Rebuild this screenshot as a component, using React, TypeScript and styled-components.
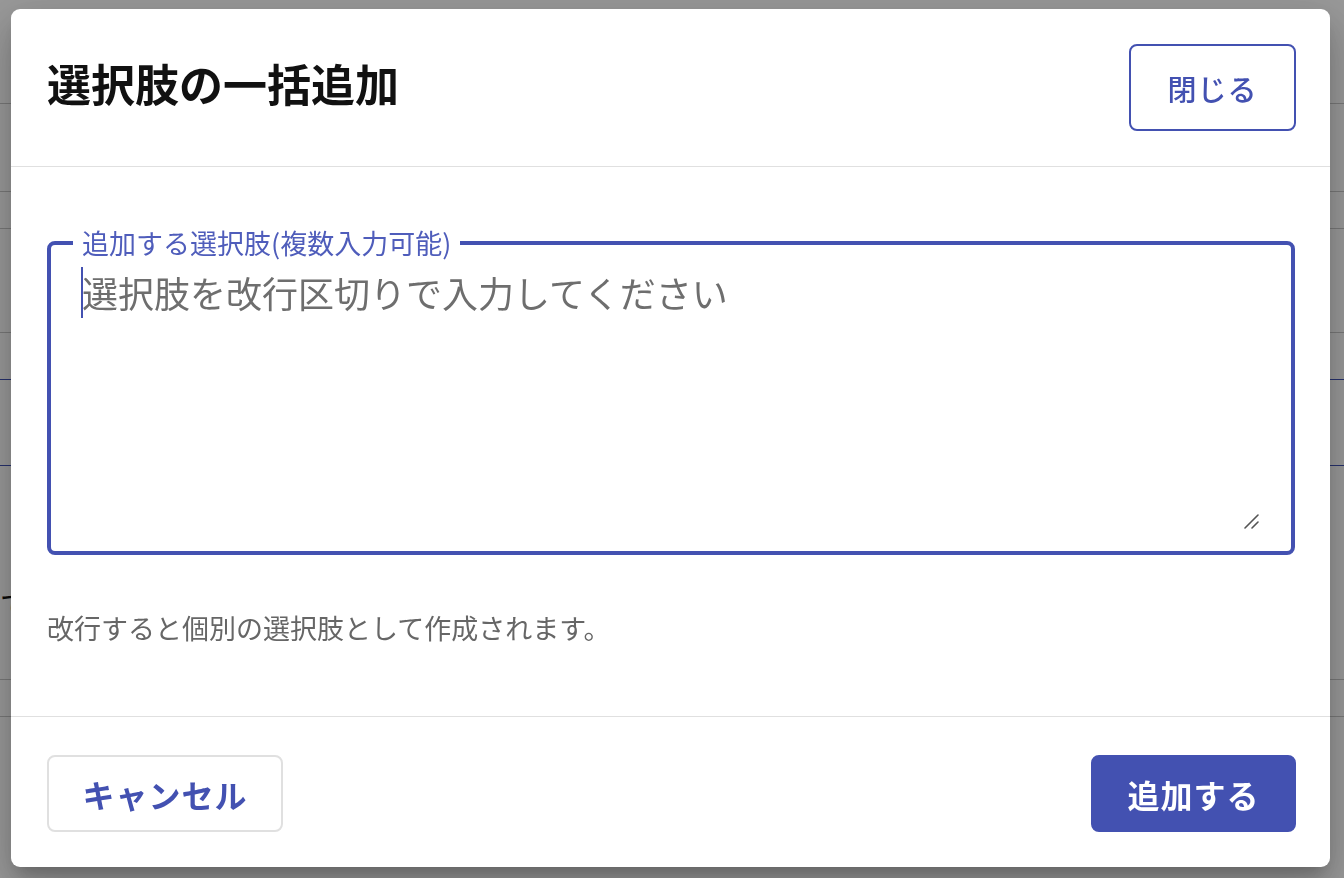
import styled, { createGlobalStyle } from 'styled-components';

const GlobalStyle = createGlobalStyle`
  html, body {
    margin: 0;
    padding: 0;
    background: #ffffff;
    font-family: "Noto Sans CJK JP", "Noto Sans", sans-serif;
  }
  #root {
    height: 878px;
    overflow: hidden;
  }
`;

const indigo = '#4351b1';

// page behind the overlay
const Page = styled.div`
  display: flex;
  flex-direction: column;
  height: 878px;
`;

const PageRow = styled.div<{ $h: number; $line: string }>`
  height: ${(p) => p.$h}px;
  border-bottom: 1px solid ${(p) => p.$line};
  box-sizing: border-box;
  display: flex;
  align-items: center;
  font-size: 30px;
  color: #111;
`;

const Backdrop = styled.div`
  position: fixed;
  inset: 0;
  background: rgba(0, 0, 0, 0.4);
  display: flex;
  align-items: flex-start;
  padding: 9px 14px 0 11px;
`;

const Dialog = styled.div`
  flex: 1;
  background: #fff;
  border-radius: 9px;
  display: flex;
  flex-direction: column;
  box-shadow: 0 11px 15px -7px rgba(0, 0, 0, 0.2), 0 24px 38px 3px rgba(0, 0, 0, 0.14),
    0 9px 46px 8px rgba(0, 0, 0, 0.12);
`;

const Header = styled.div`
  display: flex;
  align-items: center;
  justify-content: space-between;
  padding: 35px 34px 35px 36px;
  border-bottom: 1px solid #e0e0e0;
`;

const Title = styled.h2`
  margin: 0 0 10px;
  font-size: 44px;
  font-weight: 700;
  line-height: 1;
  color: #111;
`;

const OutlineButton = styled.button`
  width: 167px;
  height: 87px;
  box-sizing: border-box;
  background: #fff;
  border: 2px solid ${indigo};
  border-radius: 8px;
  color: ${indigo};
  font-family: inherit;
  font-size: 29px;
  font-weight: 500;
  letter-spacing: 1px;
  cursor: pointer;
`;

const Body = styled.div`
  padding: 62px 35px 66px 36px;
  display: flex;
  flex-direction: column;
`;

const Field = styled.fieldset`
  margin: 0;
  border: 4px solid ${indigo};
  border-radius: 8px;
  padding: 11px 31px 25px 31px;
  min-width: 0;
`;

const Legend = styled.legend`
  margin-left: -9px;
  padding: 0 9px;
  font-size: 27px;
  line-height: 1;
  color: #4f5dbb;
`;

const InputWrap = styled.div`
  position: relative;
  display: flex;
`;

const TextArea = styled.textarea`
  flex: 1;
  height: 259px;
  margin: 0;
  padding: 0;
  border: none;
  outline: none;
  resize: none;
  font-family: inherit;
  font-size: 36px;
  line-height: 51.75px;
  color: #222;
  caret-color: transparent;
  background: transparent;

  &::placeholder {
    color: #6e6e6e;
    opacity: 1;
  }
`;

const Caret = styled.span`
  position: absolute;
  left: -1px;
  top: 0;
  width: 2px;
  height: 51px;
  background: ${indigo};
`;

const Grip = styled.svg`
  position: absolute;
  right: 1px;
  bottom: -3px;
  width: 16px;
  height: 16px;
`;

const Helper = styled.p`
  margin: 50px 0 0;
  font-size: 27px;
  line-height: 45px;
  color: #666;
`;

const Footer = styled.div`
  display: flex;
  align-items: center;
  justify-content: space-between;
  padding: 38px 34px 35px 36px;
  border-top: 1px solid #e0e0e0;
`;

const FooterButton = styled.button<{ $primary?: boolean }>`
  height: 77px;
  width: ${(p) => (p.$primary ? '205px' : '236px')};
  box-sizing: border-box;
  border-radius: 8px;
  border: 2px solid ${(p) => (p.$primary ? indigo : '#e0e0e0')};
  background: ${(p) => (p.$primary ? indigo : '#fff')};
  color: ${(p) => (p.$primary ? '#fff' : indigo)};
  font-family: inherit;
  font-size: 32px;
  font-weight: 700;
  letter-spacing: 1px;
  cursor: pointer;
`;

const rows = [
  { h: 104, line: '#c8c8c8', text: '' },
  { h: 88, line: '#c8c8c8', text: '' },
  { h: 37, line: '#c8c8c8', text: '' },
  { h: 104, line: '#c8c8c8', text: '' },
  { h: 47, line: '#3f51b5', text: '' },
  { h: 86, line: '#3f51b5', text: '' },
  { h: 60, line: 'transparent', text: '' },
  { h: 154, line: '#c8c8c8', text: 'で' },
  { h: 37, line: '#c8c8c8', text: '' },
];

export default function App() {
  return (
    <>
      <GlobalStyle />
      <Page>
        {rows.map((r, i) => (
          <PageRow key={i} $h={r.h} $line={r.line}>
            {r.text}
          </PageRow>
        ))}
      </Page>
      <Backdrop>
        <Dialog>
          <Header>
            <Title>選択肢の一括追加</Title>
            <OutlineButton>閉じる</OutlineButton>
          </Header>
          <Body>
            <Field>
              <Legend>追加する選択肢(複数入力可能)</Legend>
              <InputWrap>
                <TextArea placeholder="選択肢を改行区切りで入力してください" />
                <Caret />
                <Grip viewBox="0 0 16 16" aria-hidden="true">
                  <path d="M2 15 L15 2 M9 15 L15 9" stroke="#555" strokeWidth="1.6" strokeLinecap="round" fill="none" />
                </Grip>
              </InputWrap>
            </Field>
            <Helper>改行すると個別の選択肢として作成されます。</Helper>
          </Body>
          <Footer>
            <FooterButton>キャンセル</FooterButton>
            <FooterButton $primary>追加する</FooterButton>
          </Footer>
        </Dialog>
      </Backdrop>
    </>
  );
}
